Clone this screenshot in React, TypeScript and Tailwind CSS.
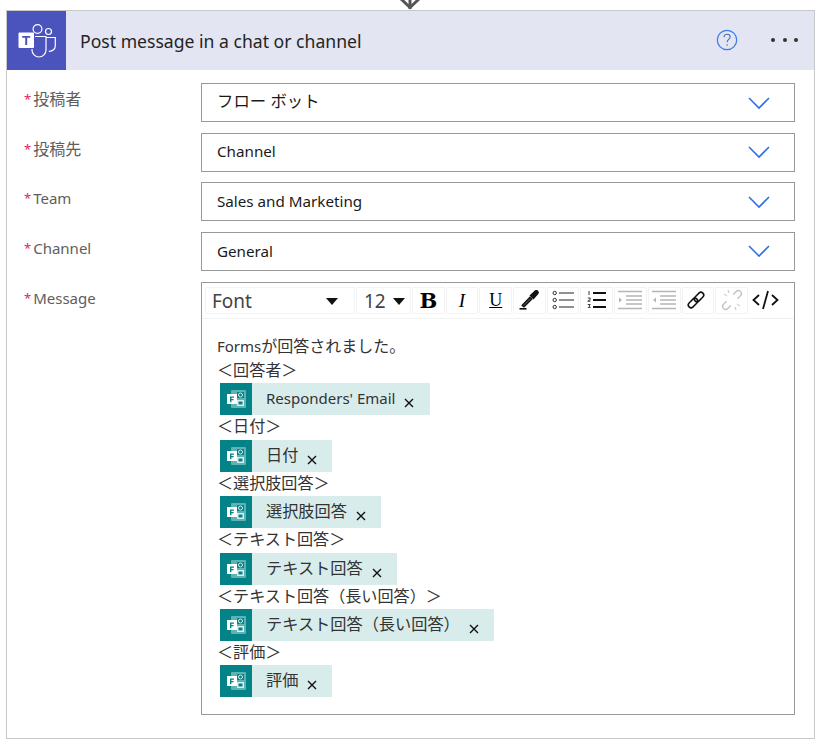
import React from "react";

const F = { fontFamily: '"Noto Sans", "Noto Sans CJK JP", sans-serif' };

function Chevron() {
  return (
    <svg width="24" height="14" viewBox="0 0 24 14" className="shrink-0">
      <path d="M2 2 L12 12 L22 2" fill="none" stroke="#2f6fec" strokeWidth="1.6" />
    </svg>
  );
}

function FormsIcon() {
  return (
    <span className="w-8 h-8 bg-[#038387] flex items-center justify-center shrink-0">
      <svg width="21" height="20" viewBox="0 0 21 20">
        <rect x="5" y="1" width="15" height="18" rx="1" fill="#5fb3b5" />
        <rect x="11" y="3" width="7" height="6" fill="#038387" />
        <circle cx="14.5" cy="6" r="2" fill="none" stroke="#d8eeee" strokeWidth="1" />
        <rect x="11" y="11" width="7" height="6" fill="#d8eeee" />
        <rect x="12.5" y="12.5" width="4" height="3" fill="#038387" />
        <rect x="1" y="5" width="10" height="10" fill="#ffffff" />
        <path d="M4 7.5h4v1.3H5.4v1.2h2.2v1.2H5.4v2H4z" fill="#038387" />
      </svg>
    </span>
  );
}

function Token({ label, latin }: { label: string; latin?: boolean }) {
  return (
    <div className="flex h-8">
      <div className="flex h-8 bg-[#d8eceb] items-start">
        <FormsIcon />
        <span
          className={
            latin
              ? "ml-[14px] mt-[3px] text-[15px] leading-6 text-[#333] whitespace-nowrap"
              : "ml-[14px] mt-[3px] text-[16.2px] leading-6 text-[#333] whitespace-nowrap"
          }
        >
          {label}
        </span>
        <span className={latin ? "mt-[15px] ml-[9px] mr-[16px] leading-none" : "mt-[15px] ml-[9px] mr-[15px] leading-none"}>
          <svg width="10" height="10" viewBox="0 0 10 10" className="block">
            <path d="M1 1 L9 9 M9 1 L1 9" stroke="#111" strokeWidth="1.4" />
          </svg>
        </span>
      </div>
    </div>
  );
}

function Label({ label, cjk }: { label: string; cjk?: boolean }) {
  return (
    <div className="w-[194px] pl-[17px] pt-[4px] leading-6 text-[#605e5c] flex">
      <span className="text-[#e0245e] text-[13px] mr-[2px]">*</span>
      <span className={cjk ? "text-[16px]" : "text-[15px]"}>{label}</span>
    </div>
  );
}

function Field({ label, value, big, cjk }: { label: string; value: string; big?: boolean; cjk?: boolean }) {
  return (
    <div className="flex items-start">
      <Label label={label} cjk={cjk} />
      <div className="w-[594px] h-[39px] border border-[#999] flex items-center justify-between pl-[15px] pr-[23px]">
        <span className={big ? "text-[16.4px] text-[#1a1a1a] -mt-[2px]" : "text-[15.2px] text-[#1a1a1a] -mt-[1px]"}>{value}</span>
        <Chevron />
      </div>
    </div>
  );
}

function Btn({ children, w = "w-[32.7px]" }: { children: React.ReactNode; w?: string }) {
  return (
    <span className={`${w} h-[27px] border border-[#f3f3f3] rounded-[2px] flex items-center justify-center shrink-0`}>
      {children}
    </span>
  );
}

function Line({ children }: { children: React.ReactNode }) {
  return <div className="h-[24.4px] leading-[22px] text-[16.1px] text-[#333] whitespace-nowrap -ml-[3px]">{children}</div>;
}

export default function App() {
  return (
    <div className="w-[820px] h-[745px] bg-white overflow-hidden relative" style={F}>
      <svg className="absolute left-[399px] top-0" width="22" height="11" viewBox="0 0 22 11">
        <path d="M2 -1 L11 7.5 L20 -1" fill="none" stroke="#555" strokeWidth="3" />
        <path d="M11 0 V9" fill="none" stroke="#555" strokeWidth="3" />
      </svg>
      <div className="pt-[10px] pl-[6px]">
        <div className="w-[809px] h-[729px] border border-[#c8c8c8]">
          <div className="h-[59px] bg-[#e3e5f3] flex items-center">
            <div className="w-[59px] h-[59px] bg-[#4b53bc] flex items-center justify-center shrink-0">
              <svg width="38" height="34" viewBox="0 0 38 34" fill="none">
                <circle cx="19.5" cy="5" r="4.4" stroke="#fff" strokeWidth="1.2" />
                <circle cx="30.5" cy="7.5" r="3" stroke="#fff" strokeWidth="1.2" />
                <path d="M28 13.5h9.3v8.5a5.5 5.5 0 0 1-6.5 5.2" stroke="#fff" strokeWidth="1.2" />
                <path d="M14 25v1a7 7 0 0 0 14 0V12.5H17" stroke="#fff" strokeWidth="1.2" />
                <rect x="0.5" y="8.5" width="15.5" height="15.5" rx="1" fill="#fff" />
                <path d="M4.2 12h8v1.8H9.2V21H7.2v-7.2h-3z" fill="#4b53bc" />
              </svg>
            </div>
            <div className="ml-[14px] mt-[1px] text-[17.6px] text-[#252423] flex-1 whitespace-nowrap">Post message in a chat or channel</div>
            <svg width="22" height="22" viewBox="0 0 22 22" className="mr-[33px] -mt-[1px]" fill="none">
              <circle cx="11" cy="11" r="9.7" stroke="#3b78f0" strokeWidth="1.2" />
              <path d="M8 8.3c0-1.8 1.4-3 3.1-3 1.7 0 3 1.1 3 2.7 0 2.4-3 2.4-3 5.2" stroke="#4a6fb0" strokeWidth="1.1" />
              <circle cx="11.1" cy="16" r="0.8" fill="#4a6fb0" />
            </svg>
            <div className="flex mr-[16px] w-[27px] justify-between -mt-[1px]">
              <span className="w-1 h-1 rounded-full bg-[#333]" />
              <span className="w-1 h-1 rounded-full bg-[#333]" />
              <span className="w-1 h-1 rounded-full bg-[#333]" />
            </div>
          </div>
          <div className="pt-[13px] flex flex-col gap-[10.67px]">
            <Field label="投稿者" value="フロー ボット" big cjk />
            <Field label="投稿先" value="Channel" cjk />
            <Field label="Team" value="Sales and Marketing" />
            <Field label="Channel" value="General" />
            <div className="flex items-start">
              <Label label="Message" />
              <div className="w-[594px] h-[433px] border border-[#999]">
                <div className="h-[36px] px-[3px] pt-[4px] border-b border-[#f1f1f1] flex gap-[1px]">
                  <Btn w="w-[150px]">
                    <span className="flex-1 pl-[6px] text-[19px] text-[#444] mt-[2px]">Font</span>
                    <svg width="12" height="7" viewBox="0 0 12 7" className="mr-[16px] mt-[2px]"><path d="M0 0h12L6 7z" fill="#111" /></svg>
                  </Btn>
                  <Btn w="w-[55px]">
                    <span className="text-[19px] text-[#444] flex-1 pl-[7px] mt-[2px]">12</span>
                    <svg width="12" height="7" viewBox="0 0 12 7" className="mr-[5px] mt-[2px]"><path d="M0 0h12L6 7z" fill="#111" /></svg>
                  </Btn>
                  <Btn><span className="text-[21px] font-bold text-black leading-none" style={{ fontFamily: '"DejaVu Serif", serif' }}>B</span></Btn>
                  <Btn><span className="text-[19px] italic text-black leading-none" style={{ fontFamily: '"Liberation Serif", serif' }}>I</span></Btn>
                  <Btn><span className="text-[18px] text-black leading-none underline" style={{ fontFamily: '"Liberation Serif", serif' }}>U</span></Btn>
                  <Btn>
                    <svg width="20" height="20" viewBox="0 0 20 20">
                      <path d="M3 15.5 L11 7 L13 9 L5 17z" fill="#444" stroke="#111" strokeWidth="1.1" />
                      <path d="M10.5 5.5 L15.5 0.8 a2.4 2.4 0 0 1 3.6 3.4 L14.5 9.5z" fill="#111" />
                      <rect x="0.5" y="18" width="7" height="1.6" fill="#111" />
                    </svg>
                  </Btn>
                  <Btn>
                    <svg width="23" height="20" viewBox="0 0 23 20" fill="none">
                      <circle cx="2.7" cy="3" r="1.7" stroke="#333" />
                      <circle cx="2.7" cy="10" r="1.7" stroke="#333" />
                      <circle cx="2.7" cy="17" r="1.7" stroke="#333" />
                      <path d="M7 3h15M7 10h15M7 17h15" stroke="#222" strokeWidth="1.2" />
                    </svg>
                  </Btn>
                  <Btn>
                    <svg width="20" height="20" viewBox="0 0 20 20" fill="none">
                      <path d="M2 1v4M0.8 8h2.4v1.6l-2.4 1.6h2.6M0.8 14.5h2.4l-1 1.4 1 1.5H0.8" stroke="#222" strokeWidth="0.9" />
                      <path d="M6 3h13M6 10h13M6 17h13" stroke="#111" strokeWidth="2" />
                    </svg>
                  </Btn>
                  <Btn>
                    <svg width="24" height="20" viewBox="0 0 24 20" fill="none">
                      <path d="M0 1.5h24M8 6h16M8 10h16M8 14h16M0 18.5h24" stroke="#b5b5b5" strokeWidth="1.3" />
                      <path d="M1 7.5l3 2.5-3 2.5z" fill="#b5b5b5" />
                    </svg>
                  </Btn>
                  <Btn>
                    <svg width="24" height="20" viewBox="0 0 24 20" fill="none">
                      <path d="M0 1.5h24M8 6h16M8 10h16M8 14h16M0 18.5h24" stroke="#b5b5b5" strokeWidth="1.3" />
                      <path d="M4 7.5L1 10l3 2.5z" fill="#b5b5b5" />
                    </svg>
                  </Btn>
                  <Btn>
                    <svg width="22" height="22" viewBox="0 0 22 22" fill="none" stroke="#111" strokeWidth="1.5" className="mr-[4px]">
                      <rect x="-5.5" y="-2.8" width="11" height="5.6" rx="2.8" transform="translate(8 14) rotate(-45)" />
                      <rect x="-5.5" y="-2.8" width="11" height="5.6" rx="2.8" transform="translate(14 8) rotate(-45)" />
                    </svg>
                  </Btn>
                  <Btn>
                    <svg width="22" height="22" viewBox="0 0 22 22" fill="none" stroke="#c4c4c4" strokeWidth="1.4">
                      <path d="M1 -3 H-3.3 a3 3 0 0 0 0 6 H1" transform="translate(7 15) rotate(-45)" />
                      <path d="M-1 -3 H3.3 a3 3 0 0 1 0 6 H-1" transform="translate(15 7) rotate(-45)" />
                      <path d="M3 5l3 2M7 1l1 3M15 21l-1-3M19 17l-3-2" strokeWidth="1" />
                    </svg>
                  </Btn>
                  <span className="w-[33px] h-[27px] flex items-center justify-center shrink-0">
                    <svg width="27" height="20" viewBox="0 0 27 20" fill="none" stroke="#111" strokeWidth="1.8">
                      <path d="M7 5L1.5 10 7 15M20 5l5.5 5L20 15M16 1l-5 18" />
                    </svg>
                  </span>
                </div>
                <div className="pt-[16px] pl-[18px]">
                  <Line><span className="text-[15px]">Forms</span><span className="text-[16px]">が回答されました。</span></Line>
                  <Line>＜回答者＞</Line>
                  <Token label="Responders' Email" latin />
                  <Line>＜日付＞</Line>
                  <Token label="日付" />
                  <Line>＜選択肢回答＞</Line>
                  <Token label="選択肢回答" />
                  <Line>＜テキスト回答＞</Line>
                  <Token label="テキスト回答" />
                  <Line>＜テキスト回答（長い回答）＞</Line>
                  <Token label="テキスト回答（長い回答）" />
                  <Line>＜評価＞</Line>
                  <Token label="評価" />
                </div>
              </div>
            </div>
          </div>
        </div>
      </div>
    </div>
  );
}
